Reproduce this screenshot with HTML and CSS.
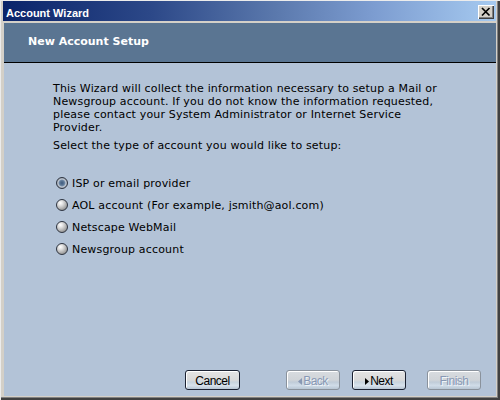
FILE: index.html
```html
<!DOCTYPE html>
<html>
<head>
<meta charset="utf-8">
<title>Account Wizard</title>
<link rel="stylesheet" href="styles.css">
</head>
<body>
<div class="window">
  <div class="titlebar">
    <span class="title">Account Wizard</span>
    <button class="close" aria-label="Close">
      <svg width="16" height="14" viewBox="0 0 16 14"><path d="M4 3 L11.5 10.5 M11.5 3 L4 10.5" stroke="#000" stroke-width="1.7" fill="none"/></svg>
    </button>
  </div>
  <div class="header">
    <h1 class="header-title">New Account Setup</h1>
  </div>
  <div class="content">
    <p class="intro">This Wizard will collect the information necessary to setup a Mail or Newsgroup account. If you do not know the information requested, please contact your System Administrator or Internet Service Provider.</p>
    <p class="prompt">Select the type of account you would like to setup:</p>
    <div class="options">
      <div class="option"><span class="radio checked"></span><span class="option-label">ISP or email provider</span></div>
      <div class="option"><span class="radio"></span><span class="option-label">AOL account (For example, jsmith@aol.com)</span></div>
      <div class="option"><span class="radio"></span><span class="option-label">Netscape WebMail</span></div>
      <div class="option"><span class="radio"></span><span class="option-label">Newsgroup account</span></div>
    </div>
    <div class="buttons">
      <button class="btn btn-cancel">Cancel</button>
      <button class="btn btn-back" disabled><svg class="arrow" width="4" height="7" viewBox="0 0 4 7"><path d="M4 0 L0 3.5 L4 7 Z" fill="#8898b4"/></svg>Back</button>
      <button class="btn btn-next"><svg class="arrow" width="4" height="7" viewBox="0 0 4 7"><path d="M0 0 L4 3.5 L0 7 Z" fill="#000"/></svg>Next</button>
      <button class="btn btn-finish" disabled>Finish</button>
    </div>
  </div>
</div>
</body>
</html>
```

FILE: styles.css
```css
html, body {
  margin: 0;
  padding: 0;
  background: #d4d0c8;
}

.window {
  width: 500px;
  height: 400px;
  box-sizing: border-box;
  display: flex;
  flex-direction: column;
  background: #d4d0c8;
  padding: 1px 4px 4px 4px;
  box-shadow: inset 1px 1px 0 #ececec, inset -2px -2px 0 #404040, inset -3px -3px 0 #808080;
}

.titlebar {
  height: 20px;
  flex: none;
  display: flex;
  align-items: flex-start;
  justify-content: space-between;
  margin-left: -1px;
  margin-bottom: 2px;
  background: linear-gradient(to right, #0a246a 0%, #2c4888 30%, #5a78ac 55%, #7c9cd0 75%, #a6caf0 100%);
}

.title {
  font-family: "Liberation Sans", Arial, sans-serif;
  font-weight: bold;
  font-size: 11px;
  line-height: 12px;
  color: #fff;
  padding: 6px 0 0 3px;
}

.close {
  width: 16px;
  height: 14px;
  margin: 4px 2px 0 0;
  padding: 0;
  border: none;
  background: #d4d0c8;
  box-shadow: inset 1px 1px 0 #fff, inset -1px -1px 0 #404040, inset -2px -2px 0 #808080;
  display: block;
}

.close svg {
  display: block;
}

.header {
  height: 39px;
  flex: none;
  background: #5a7592;
  border-bottom: 1px solid #000;
}

.header-title {
  margin: 0;
  padding: 12px 0 0 24px;
  font-family: "DejaVu Sans", Verdana, sans-serif;
  font-weight: bold;
  font-size: 11px;
  line-height: 13px;
  color: #fff;
}

.content {
  flex: 1;
  display: flex;
  flex-direction: column;
  background: #b3c3d7;
  padding: 19px 15px 6px 49px;
  font-family: "DejaVu Sans", Verdana, sans-serif;
  font-size: 11px;
  line-height: 13px;
  letter-spacing: 0.17px;
  color: #000;
}

.intro {
  margin: 0 0 5px 0;
  max-width: 400px;
}

.prompt {
  margin: 0;
}

.options {
  margin-top: 19px;
}

.option {
  display: flex;
  align-items: flex-start;
  height: 22px;
}

.radio {
  width: 12px;
  height: 12px;
  box-sizing: border-box;
  border-radius: 50%;
  margin: 6px 0 0 3px;
  border: 1px solid #2e3440;
  background: radial-gradient(circle at 35% 30%, #ffffff 0, #e2e2e2 25%, #a8a8a8 65%, #6e6e6e 100%);
  flex: none;
}

.radio.checked {
  background: radial-gradient(circle at 50% 50%, #3e5a80 0, #5a7592 28%, #6e88a6 40%, #c0c8d2 55%, #9098a4 78%, #606a78 100%);
}

.option-label {
  margin: 6px 0 0 4px;
}

.buttons {
  margin-top: auto;
  display: flex;
  justify-content: flex-end;
  height: 20px;
}

.btn {
  box-sizing: border-box;
  width: 54px;
  height: 20px;
  padding: 2px 0 0 0;
  display: flex;
  align-items: center;
  justify-content: center;
  font-family: "Liberation Sans", Arial, sans-serif;
  font-size: 12px;
  letter-spacing: -0.5px;
  color: #000;
  border: 1px solid #1c2232;
  border-radius: 3px;
  background: linear-gradient(to bottom, #e4e4e4 0%, #dadada 50%, #c8d4de 62%, #d8e2ec 80%, #b8c6d4 100%);
  box-shadow: inset 1px 1px 0 #ffffff;
}

.btn-cancel {
  width: 55px;
}

.btn-back {
  margin-left: 46px;
}

.btn-next {
  margin-left: 12px;
}

.btn-finish {
  margin-left: 21px;
}

.btn:disabled {
  color: #8898b4;
  border-color: #8a929c;
  text-shadow: 1px 1px 0 #f0f4f8;
  background: linear-gradient(to bottom, #d8dce0 0%, #d0d4d8 50%, #c0ccd8 62%, #d0dce8 80%, #b8c6d4 100%);
}

.arrow {
  display: block;
  margin-right: 1px;
}
```
